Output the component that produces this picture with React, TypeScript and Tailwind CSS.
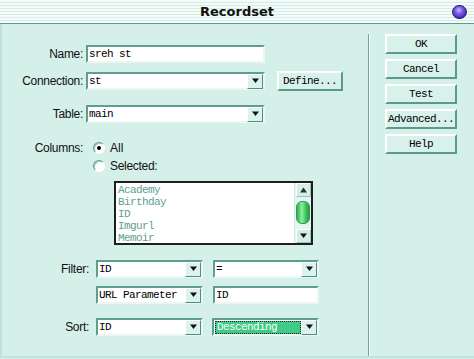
import React from "react";

const mono = { fontFamily: '"Liberation Mono", "DejaVu Sans Mono", monospace' };

function Arrow({ up = false }: { up?: boolean }) {
  return (
    <svg width="9" height="6" viewBox="0 0 9 6">
      {up ? <polygon points="1,5.5 8,5.5 4.5,0.5" fill="#1a3a34" /> : <polygon points="1,0.5 8,0.5 4.5,5" fill="#111" />}
    </svg>
  );
}

function DropBtn() {
  return (
    <div className="flex h-[15px] w-[16px] shrink-0 items-center justify-center border border-t-white border-l-white border-r-[#4f8f82] border-b-[#4f8f82] bg-[#dcf2ec]">
      <Arrow />
    </div>
  );
}

function Field({ w, text, select = false, highlight = false }: { w: number; text: string; select?: boolean; highlight?: boolean }) {
  return (
    <div
      className="flex h-[18px] items-center border-2 border-t-[#5e9e91] border-l-[#5e9e91] border-r-[#eaf7f3] border-b-[#eaf7f3] bg-white"
      style={{ width: w }}
    >
      <div className="flex h-full flex-1 items-center overflow-hidden pl-[1px]">
        {highlight ? (
          <div className="flex h-[13px] w-full items-center border border-dotted border-[#222] bg-[#3ecb86] pl-[1px] text-[11px] tracking-[-0.6px] text-white" style={mono}>
            {text}
          </div>
        ) : (
          <span className="text-[11px] leading-none tracking-[-0.6px] text-black" style={mono}>
            {text}
          </span>
        )}
      </div>
      {select && <DropBtn />}
    </div>
  );
}

function Button({ label, w = 72 }: { label: string; w?: number }) {
  return (
    <div
      className="flex h-[20px] items-center justify-center border-2 border-t-white border-l-white border-r-[#5a9a8c] border-b-[#5a9a8c] bg-[#d9f1eb] text-[11px] tracking-[-0.6px] text-black"
      style={{ width: w, ...mono }}
    >
      {label}
    </div>
  );
}

function Radio({ checked }: { checked: boolean }) {
  return (
    <div className="relative h-[12px] w-[12px] rounded-full border border-t-[#5e9e91] border-l-[#5e9e91] border-r-white border-b-white bg-white shadow-[inset_1px_1px_0_#9ccabf]">
      {checked && <div className="absolute left-[3px] top-[3px] h-[4px] w-[4px] rounded-full bg-black" />}
    </div>
  );
}

export default function App() {
  const labelCls = "text-[12px] tracking-[-0.3px] text-[#111] text-right";
  const sans = { fontFamily: '"Liberation Sans", Arial, sans-serif' };
  return (
    <div className="h-[359px] w-[474px] overflow-hidden bg-[#d5efe9]" style={sans}>
      {/* title bar */}
      <div className="relative flex h-[24px] items-center justify-center border-b border-[#5a9e90] bg-[repeating-linear-gradient(180deg,#f4fbf9_0px,#f4fbf9_2px,#d3ece6_2px,#d3ece6_3px)]">
        <span className="text-[13px] font-bold text-[#111]" style={{ fontFamily: '"DejaVu Sans", Verdana, sans-serif' }}>
          Recordset
        </span>
        <div className="absolute left-[452px] top-[5px] h-[14px] w-[15px] rounded-full border border-[#2a1a70] bg-[radial-gradient(circle_at_45%_35%,#c8b8ff_0%,#7a5ce8_35%,#3b1fae_80%)]" />
      </div>

      <div className="flex h-[334px] border-b-2 border-l-2 border-b-[#bfe3da] border-l-[#bfe3da] pl-[3px]">
        {/* left */}
        <div className="flex w-[363px] flex-col">
          <div className="mt-[21px] flex items-center">
            <div className={`${labelCls} w-[78px]`}>Name:</div>
            <div className="ml-[3px]">
              <Field w={179} text="sreh st" />
            </div>
          </div>
          <div className="mt-[8px] flex items-center">
            <div className={`${labelCls} w-[78px]`}>Connection:</div>
            <div className="ml-[3px]">
              <Field w={179} text="st" select />
            </div>
            <div className="ml-[12px]">
              <Button label="Define..." w={66} />
            </div>
          </div>
          <div className="mt-[14px] flex items-center">
            <div className={`${labelCls} w-[78px]`}>Table:</div>
            <div className="ml-[3px]">
              <Field w={179} text="main" select />
            </div>
          </div>
          <div className="mt-[16px] flex h-[18px] items-center">
            <div className={`${labelCls} w-[78px]`}>Columns:</div>
            <div className="ml-[10px]">
              <Radio checked />
            </div>
            <span className="ml-[5px] text-[12px] text-[#111]">All</span>
          </div>
          <div className="flex h-[18px] items-center">
            <div className="ml-[88px]">
              <Radio checked={false} />
            </div>
            <span className="ml-[5px] text-[12px] tracking-[-0.3px] text-[#111]">Selected:</span>
          </div>
          {/* listbox */}
          <div className="ml-[109px] mt-[6px] flex h-[64px] w-[199px] border-2 border-[#1e1e1e] bg-white">
            <div className="flex flex-1 flex-col pl-[2px] pt-[1px]">
              {["Academy", "Birthday", "ID", "Imgurl", "Memoir"].map((t) => (
                <div key={t} className="h-[12px] text-[11px] leading-[12px] tracking-[-0.6px] text-[#5f9e90]" style={mono}>
                  {t}
                </div>
              ))}
            </div>
            <div className="flex w-[17px] flex-col items-center border-l border-[#cfe8e2] bg-[#e6f5f1]">
              <div className="flex h-[14px] w-[15px] items-center justify-center border border-t-white border-l-white border-r-[#9cc6bc] border-b-[#9cc6bc] bg-[#d6eee8]">
                <Arrow up />
              </div>
              <div className="mt-[4px] h-[23px] w-[14px] rounded-[6px] border border-[#2f9c52] bg-[linear-gradient(90deg,#2fb04f,#8cf2a0_40%,#47c865_70%,#2a9a46)]" />
              <div className="flex-1" />
              <div className="flex h-[14px] w-[15px] items-center justify-center border border-t-white border-l-white border-r-[#9cc6bc] border-b-[#9cc6bc] bg-[#d6eee8]">
                <Arrow />
              </div>
            </div>
          </div>
          {/* filter */}
          <div className="mt-[15px] flex items-center">
            <div className={`${labelCls} w-[84px]`}>Filter:</div>
            <div className="ml-[7px]">
              <Field w={107} text="ID" select />
            </div>
            <div className="ml-[10px]">
              <Field w={106} text="=" select />
            </div>
          </div>
          <div className="mt-[8px] flex items-center">
            <div className="ml-[91px]">
              <Field w={107} text="URL Parameter" select />
            </div>
            <div className="ml-[10px]">
              <Field w={106} text="ID" />
            </div>
          </div>
          <div className="mt-[14px] flex items-center">
            <div className={`${labelCls} w-[84px]`}>Sort:</div>
            <div className="ml-[7px]">
              <Field w={107} text="ID" select />
            </div>
            <div className="ml-[9px]">
              <Field w={107} text="Descending" select highlight />
            </div>
          </div>
        </div>
        {/* separator */}
        <div className="mt-[10px] w-[2px] border-l border-r border-l-[#6aa99b] border-r-white" />
        {/* right */}
        <div className="flex flex-col gap-[5px] pl-[15px] pt-[10px]">
          <Button label="OK" />
          <Button label="Cancel" />
          <Button label="Test" />
          <Button label="Advanced..." />
          <Button label="Help" />
        </div>
      </div>
    </div>
  );
}
